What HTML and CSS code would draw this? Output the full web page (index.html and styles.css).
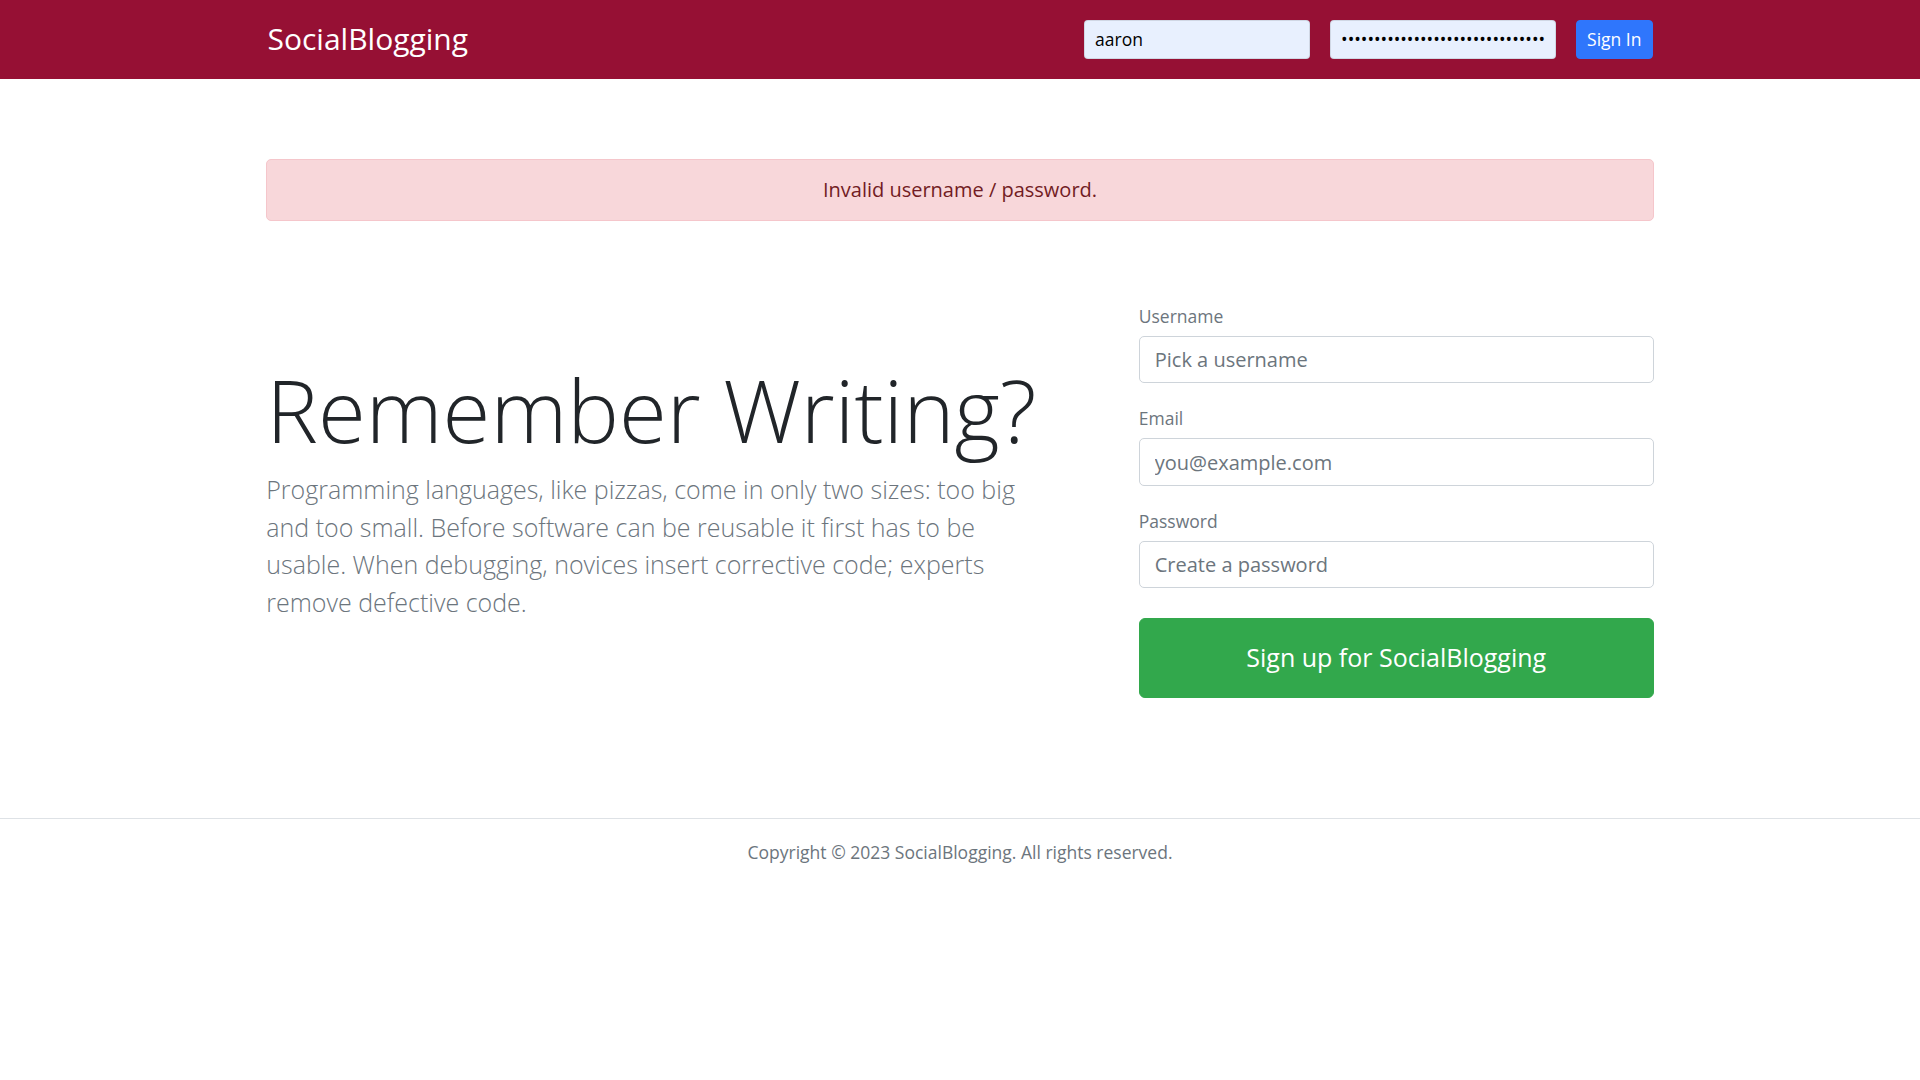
FILE: index.html
```html
<!DOCTYPE html>
<html lang="en">
<head>
<meta charset="utf-8">
<title>SocialBlogging</title>
<link rel="stylesheet" href="styles.css">
</head>
<body>
<header class="header-bar">
  <div class="header-inner">
    <h4 class="brand"><a href="#" class="brand-link">SocialBlogging</a></h4>
    <form class="login-form">
      <input class="hdr-input" type="text" value="aaron">
      <input class="hdr-input" type="password" value="aaronaaronaaronaaronaaronaaronaaronaaronaaron">
      <button class="btn-signin" type="button">Sign In</button>
    </form>
  </div>
</header>
<main class="container">
  <div class="alert">Invalid username / password.</div>
  <div class="hero-row">
    <div class="hero-left">
      <h1 class="display">Remember Writing?</h1>
      <p class="lead">Programming languages, like pizzas, come in only two sizes: too big and too small. Before software can be reusable it first has to be usable. When debugging, novices insert corrective code; experts remove defective code.</p>
    </div>
    <div class="hero-right">
      <form class="reg-form">
        <div class="form-group">
          <label class="field-label">Username</label>
          <input class="field-input" type="text" placeholder="Pick a username">
        </div>
        <div class="form-group">
          <label class="field-label">Email</label>
          <input class="field-input" type="text" placeholder="you@example.com">
        </div>
        <div class="form-group">
          <label class="field-label">Password</label>
          <input class="field-input" type="password" placeholder="Create a password">
        </div>
        <button type="button" class="btn-signup">Sign up for SocialBlogging</button>
      </form>
    </div>
  </div>
</main>
<footer class="footer">
  <p class="footer-text">Copyright © 2023 <a href="#" class="footer-link">SocialBlogging</a>. All rights reserved.</p>
</footer>
</body>
</html>
```
FILE: styles.css
```css
* { box-sizing: border-box; }
html, body { margin: 0; padding: 0; }
body {
  font-family: "Open Sans", "Liberation Sans", sans-serif;
  font-size: 20px;
  line-height: 1.5;
  color: #212529;
  background: #fff;
}
.header-bar {
  background: #961034;
  margin-bottom: 20px;
}
.header-inner {
  width: 1425px;
  margin: 0 auto;
  padding: 20px;
  display: flex;
  align-items: center;
}
.brand {
  margin: 0 auto 0 0;
  font-size: 30px;
  font-weight: 400;
  line-height: 1.2;
}
.brand-link { color: #fff; text-decoration: none; }
.login-form {
  display: flex;
  align-items: center;
  margin: 0;
}
.hdr-input {
  width: 226px;
  height: 38.75px;
  margin-right: 20px;
  padding: 5px 10px;
  font-family: "Open Sans", "Liberation Sans", sans-serif;
  font-size: 17.5px;
  line-height: 1.5;
  color: #000;
  background: #e8f0fe;
  border: 1.25px solid rgba(0,0,0,0.1);
  border-radius: 4px;
  outline: none;
}
.btn-signin {
  margin-left: 0;
  height: 38.75px;
  padding: 5px 10px;
  font-family: "Open Sans", "Liberation Sans", sans-serif;
  font-size: 17.5px;
  line-height: 1.5;
  color: #fff;
  background: #2f76fc;
  border: 1.25px solid #2f76fc;
  border-radius: 4px;
}
.container {
  width: 1425px;
  margin: 0 auto;
  padding: 60px 18.75px;
}
.alert {
  padding: 15px 25px;
  margin-bottom: 20px;
  text-align: center;
  color: #721c24;
  background: #f8d7da;
  border: 1.25px solid #f5c6cb;
  border-radius: 5px;
}
.hero-row {
  display: flex;
  align-items: center;
  margin: 0 -18.75px;
}
.hero-left {
  flex: 0 0 58.3333%;
  padding: 60px 18.75px;
}
.hero-right {
  flex: 0 0 41.6667%;
  padding: 60px 18.75px 60px 60px;
}
.display {
  margin: 0 0 10px;
  font-size: 87px;
  font-weight: 300;
  line-height: 1.2;
  white-space: nowrap;
  color: #212529;
}
.lead {
  margin: 0 0 20px;
  font-size: 25px;
  font-weight: 300;
  line-height: 1.5;
  color: #6c757d;
}
.reg-form { margin: 0; }
.form-group { margin-bottom: 20px; }
.field-label {
  display: inline-block;
  margin-bottom: 5px;
  font-size: 17.5px;
  line-height: 29px;
  color: #6c757d;
}
.field-input {
  display: block;
  width: 100%;
  height: 47.5px;
  padding: 7.5px 15px;
  font-family: "Open Sans", "Liberation Sans", sans-serif;
  font-size: 20px;
  line-height: 1.5;
  color: #495057;
  background: #fff;
  border: 1.25px solid #ced4da;
  border-radius: 5px;
  outline: none;
}
.field-input::placeholder { color: #6c757d; opacity: 1; }
.btn-signup {
  display: block;
  width: 100%;
  margin-top: 30px;
  padding: 20px 20px;
  font-family: "Open Sans", "Liberation Sans", sans-serif;
  font-size: 25px;
  line-height: 1.5;
  color: #fff;
  background: #32a84c;
  border: 1.25px solid #32a84c;
  border-radius: 6px;
}
.footer {
  border-top: 1.25px solid #dee2e6;
  padding: 20px 0;
  text-align: center;
  font-size: 17.5px;
  line-height: 1.5;
  color: #6c757d;
}
.footer-text { margin: 0; }
.footer-link { color: #6c757d; text-decoration: none; }
```
